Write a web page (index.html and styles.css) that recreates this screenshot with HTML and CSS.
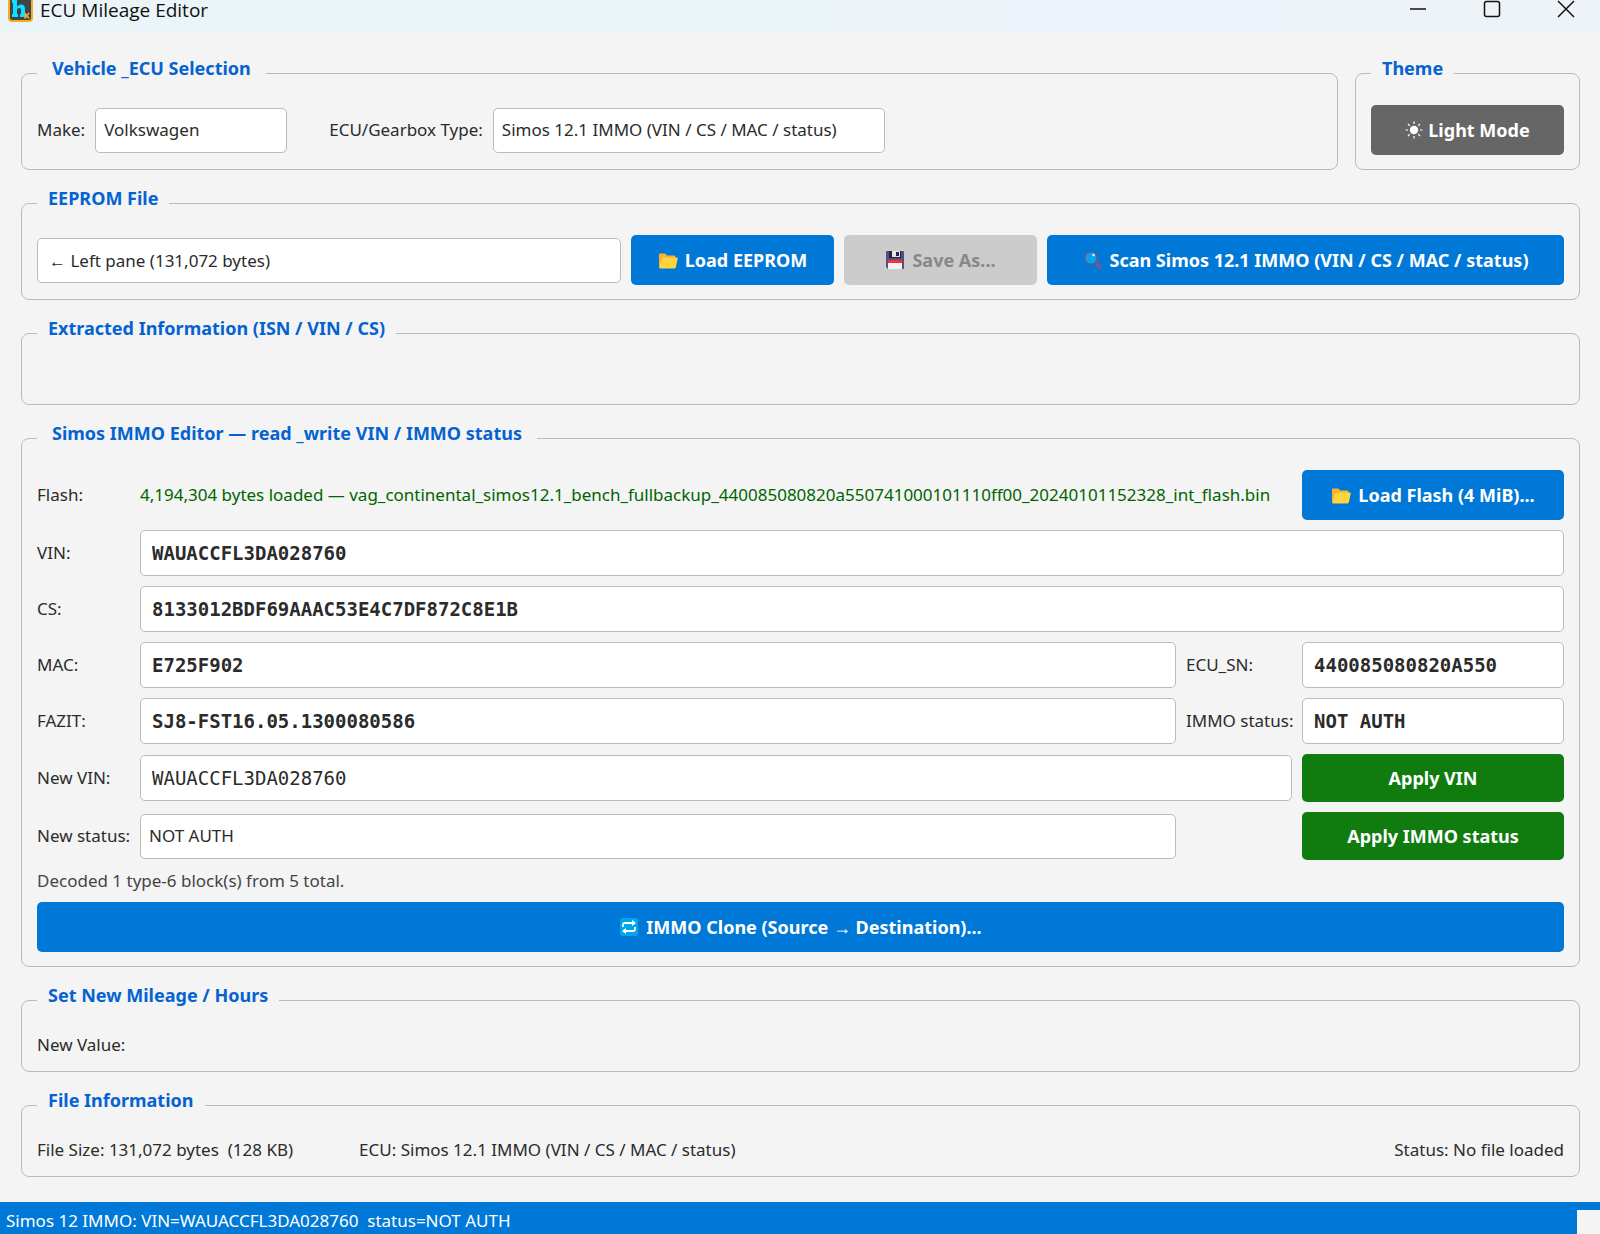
FILE: index.html
```html
<!DOCTYPE html>
<html lang="en">

<head>
    <meta charset="UTF-8">
    <meta name="viewport" content="width=device-width, initial-scale=1.0">
    <title>ECU Mileage Editor</title>
    <link rel="stylesheet" href="styles.css">
</head>

<body>
    <!-- Shared icons -->
    <svg class="sprite" aria-hidden="true">
        <symbol id="icon-folder" viewBox="0 0 20 20">
            <path d="M1 4.6Q1 3.6 2 3.6H7.2L9.2 5.6H16.4Q17.4 5.6 17.4 6.6V17H1Z" fill="#ffb02e" />
            <path d="M5.4 7.4H19Q20 7.400 19.700 8.400L17.800 17.400Q17.500 18.500 16.400 18.500H2Q1 18.500 1.300 17.400L4.300 8.200Q4.600 7.400 5.400 7.400Z" fill="#fcd53f" />
        </symbol>
    </svg>

    <header class="titlebar">
        <svg class="app-icon" viewBox="0 0 26 24" aria-hidden="true">
            <rect x="2" y="-5" width="23" height="26" rx="3" fill="#3d444c" stroke="#fbab18" stroke-width="2" />
            <path d="M5 0H10V6.500Q12 4.600 14 4.600Q18 4.600 18 9V14H19V17H13V14H14V9.500Q14 8 12.500 8Q10 8 10 10V14H11V17H5V14H6V3H5Z" fill="#0fe0ff" />
            <path d="M17.500 13L22 18.500M22 13L17.500 18.500" stroke="#fbab18" stroke-width="1.800" />
        </svg>
        <h1>ECU Mileage Editor</h1>
        <div class="window-buttons">
            <button type="button" aria-label="Minimize">
                <svg viewBox="0 0 18 18"><path d="M1 9H17" /></svg>
            </button>
            <button type="button" aria-label="Maximize">
                <svg viewBox="0 0 18 18"><rect x="1.500" y="1.500" width="15" height="15" rx="2" /></svg>
            </button>
            <button type="button" aria-label="Close">
                <svg viewBox="0 0 18 18"><path d="M1 1L17 17M17 1L1 17" /></svg>
            </button>
        </div>
    </header>

    <main>
        <div class="top-row">
            <!-- Vehicle selection -->
            <fieldset class="vehicle">
                <legend class="wide">Vehicle _ECU Selection</legend>
                <div class="row">
                    <label for="make">Make:</label>
                    <select id="make" class="make">
                        <option>Volkswagen</option>
                    </select>
                    <label for="ecuType" class="ecu-label">ECU/Gearbox Type:</label>
                    <select id="ecuType" class="ecu-type">
                        <option>Simos 12.1 IMMO (VIN / CS / MAC / status)</option>
                    </select>
                </div>
            </fieldset>

            <fieldset class="theme">
                <legend>Theme</legend>
                <div class="row">
                    <button type="button" class="btn btn-dark">
                        <svg class="sun" viewBox="0 0 18 18" aria-hidden="true">
                            <circle cx="9" cy="9" r="4.200" fill="#fff" />
                            <path d="M9 .5V3M9 15V17.500M.5 9H3M15 9H17.500M3 3L4.800 4.800M13.200 13.200L15 15M3 15L4.800 13.200M13.200 4.800L15 3" stroke="#fff" stroke-width="1.200" />
                        </svg>
                        Light Mode
                    </button>
                </div>
            </fieldset>
        </div>

        <!-- EEPROM file -->
        <fieldset>
            <legend>EEPROM File</legend>
            <div class="row">
                <input type="text" class="file-path" aria-label="EEPROM file" value="← Left pane (131,072 bytes)" readonly>
                <button type="button" class="btn load">
                    <svg class="icon" aria-hidden="true"><use href="#icon-folder" /></svg>
                    Load EEPROM
                </button>
                <button type="button" class="btn save" disabled>
                    <svg class="icon" viewBox="0 0 20 20" aria-hidden="true">
                        <path d="M1 2Q1 1 2 1H18Q19 1 19 2V18Q19 19 18 19H3L1 17Z" fill="#5a4a86" />
                        <rect x="4" y="1" width="12" height="7" fill="#321b41" />
                        <rect x="7" y="1" width="8" height="6" fill="#e6e6e6" />
                        <rect x="11" y="2" width="3" height="4" fill="#321b41" />
                        <rect x="3" y="10" width="14" height="9" fill="#f2f2f2" />
                        <rect x="3" y="10" width="14" height="3" fill="#f8312f" />
                    </svg>
                    Save As...
                </button>
                <button type="button" class="btn scan">
                    <svg class="icon" viewBox="0 0 20 20" aria-hidden="true">
                        <path d="M12 12L17 17" stroke="#6d5b95" stroke-width="4" stroke-linecap="round" />
                        <circle cx="8" cy="8" r="6.300" fill="#00a6ed" stroke="#6a5490" stroke-width="1.500" />
                        <circle cx="10.500" cy="5" r="1.300" fill="#d3f2ff" />
                    </svg>
                    Scan Simos 12.1 IMMO (VIN / CS / MAC / status)
                </button>
            </div>
        </fieldset>

        <fieldset>
            <legend>Extracted Information (ISN / VIN / CS)</legend>
            <div class="info"></div>
        </fieldset>

        <!-- IMMO editor -->
        <fieldset>
            <legend class="wide">Simos IMMO Editor — read _write VIN / IMMO status</legend>
            <div class="immo-grid">
                <span>Flash:</span>
                <output class="span-2 flash-name">4,194,304 bytes loaded — vag_continental_simos12.1_bench_fullbackup_440085080820a550741000101110ff00_20240101152328_int_flash.bin</output>
                <button type="button" class="btn">
                    <svg class="icon" aria-hidden="true"><use href="#icon-folder" /></svg>
                    Load Flash (4 MiB)...
                </button>

                <label for="vin">VIN:</label>
                <input type="text" id="vin" class="mono span-3" value="WAUACCFL3DA028760" readonly>

                <label for="cs">CS:</label>
                <input type="text" id="cs" class="mono span-3" value="8133012BDF69AAAC53E4C7DF872C8E1B" readonly>

                <label for="mac">MAC:</label>
                <input type="text" id="mac" class="mono" value="E725F902" readonly>
                <label for="ecuSn">ECU_SN:</label>
                <input type="text" id="ecuSn" class="mono" value="440085080820A550" readonly>

                <label for="fazit">FAZIT:</label>
                <input type="text" id="fazit" class="mono" value="SJ8-FST16.05.1300080586" readonly>
                <label for="immoStatus">IMMO status:</label>
                <input type="text" id="immoStatus" class="mono" value="NOT AUTH" readonly>

                <label for="newVin">New VIN:</label>
                <input type="text" id="newVin" class="mono editable span-2" value="WAUACCFL3DA028760">
                <button type="button" class="btn btn-green">Apply VIN</button>

                <label for="newStatus">New status:</label>
                <select id="newStatus">
                    <option>NOT AUTH</option>
                </select>
                <button type="button" class="btn btn-green last-col">Apply IMMO status</button>

                <p class="decoded">Decoded 1 type-6 block(s) from 5 total.</p>

                <button type="button" class="btn clone">
                    <svg class="icon" viewBox="0 0 20 20" aria-hidden="true">
                        <rect x="1" y="1" width="18" height="18" rx="2.500" fill="#00a6ed" />
                        <path d="M4 10V8Q4 6 6 6H14M16 10V12Q16 14 14 14H6" fill="none" stroke="#fff" stroke-width="1.800" />
                        <path d="M13 3L17 6L13 9ZM7 11L3 14L7 17Z" fill="#fff" />
                    </svg>
                    <span>IMMO Clone (Source <span class="arrow">→</span> Destination)...</span>
                </button>
            </div>
        </fieldset>

        <fieldset>
            <legend>Set New Mileage / Hours</legend>
            <div class="info">New Value:</div>
        </fieldset>

        <!-- File information -->
        <fieldset>
            <legend>File Information</legend>
            <div class="info">
                <span>File Size: 131,072 bytes&nbsp; (128 KB)</span>
                <span>ECU: Simos 12.1 IMMO (VIN / CS / MAC / status)</span>
                <span class="file-status">Status: No file loaded</span>
            </div>
        </fieldset>
    </main>

    <footer class="statusbar">
        <span>Simos 12 IMMO: VIN=WAUACCFL3DA028760&nbsp; status=NOT AUTH</span>
        <div class="grip"></div>
    </footer>
</body>

</html>
```
FILE: styles.css
```css
* {
    box-sizing: border-box;
}

body {
    margin: 0;
    min-height: 100vh;
    display: flex;
    flex-direction: column;
    background-color: #f4f4f4;
    color: #2b2b2b;
    font-family: "Noto Sans", sans-serif;
    font-size: 17px;
    line-height: 22px;
}

.sprite {
    display: none;
}

.titlebar {
    height: 32px;
    display: flex;
    align-items: flex-start;
    padding-left: 7px;
    background: linear-gradient(to right, #ebf4f8 50%, #edf2fb 75%, #eef3f8 90%);
}

.app-icon {
    width: 26px;
    height: 24px;
    margin-right: 7px;
}

h1 {
    margin: 0;
    color: #111;
    font-family: "Open Sans", "Noto Sans", sans-serif;
    font-size: 19px;
    font-weight: normal;
    line-height: 20px;
}

.window-buttons {
    margin-left: auto;
    display: flex;
    padding-right: 10px;
}

.window-buttons button {
    width: 48px;
    height: 18px;
    margin-left: 26px;
    padding: 0;
    border: none;
    background: none;
}

.window-buttons svg {
    width: 18px;
    height: 18px;
    fill: none;
    stroke: #111;
    stroke-width: 1.5;
}

main {
    flex: 1;
    display: flex;
    flex-direction: column;
    gap: 17px;
    padding: 25px 20px 24px 21px;
}

.top-row {
    display: flex;
    gap: 17px;
}

fieldset {
    min-width: 0;
    margin: 0;
    padding: 16px 15px 14px;
    border: 1px solid #bbb;
    border-radius: 8px;
}

/* extra bottom padding lifts the caption above the frame line */
legend {
    padding: 0 11px 10px;
    color: #0563d1;
    font-size: 18px;
    font-weight: bold;
}

legend.wide {
    padding: 0 15px 10px;
}

.vehicle {
    flex: 1;
}

.theme {
    width: 225px;
}

.theme .btn {
    flex: 1;
}

.row {
    display: flex;
    align-items: center;
    gap: 10px;
    min-height: 50px;
}

input,
select {
    width: 100%;
    min-width: 0;
    height: 45px;
    padding: 0 11px;
    border: 1px solid #bbb;
    border-radius: 5px;
    background-color: white;
    color: #2b2b2b;
    font: inherit;
}

select {
    appearance: none;
    padding: 0 8px;
}

.make {
    width: 192px;
}

.ecu-label {
    margin-left: 32px;
}

.ecu-type {
    width: 392px;
}

.file-path {
    flex: 1;
}

.mono {
    height: 46px;
    font-family: "DejaVu Sans Mono", monospace;
    font-size: 19px;
    font-weight: bold;
}

.mono.editable {
    font-weight: normal;
}

.btn {
    height: 50px;
    display: flex;
    align-items: center;
    justify-content: center;
    gap: 7px;
    padding: 0;
    border: none;
    border-radius: 5px;
    background-color: #0078d7;
    color: white;
    font: inherit;
    font-size: 18px;
    font-weight: bold;
    white-space: nowrap;
}

.btn-dark {
    background-color: #666;
    gap: 5px;
}

.btn-green {
    height: 48px;
    background-color: #107c10;
}

.btn:disabled {
    background-color: #ccc;
    color: #888;
}

.icon {
    width: 20px;
    height: 20px;
}

.sun {
    width: 18px;
    height: 18px;
}

.load {
    width: 203px;
}

.save {
    width: 193px;
}

.scan {
    width: 517px;
}

.info {
    display: flex;
    min-height: 25px;
    gap: 66px;
    align-items: center;
}

.file-status {
    margin-left: auto;
}

.immo-grid {
    display: grid;
    grid-template-columns: 93px 1fr 106px 262px;
    gap: 10px;
    align-items: center;
    white-space: nowrap;
}

.span-2 {
    grid-column: span 2;
}

.span-3 {
    grid-column: span 3;
}

.last-col {
    grid-column: 4;
}

.flash-name {
    color: #006400;
    overflow: hidden;
}

.decoded {
    grid-column: 1 / -1;
    margin: 0;
    color: #444;
}

.clone {
    grid-column: 1 / -1;
}

.arrow {
    font-weight: normal;
}

.statusbar {
    display: flex;
    justify-content: space-between;
    border-top: 8px solid #0078d7;
    background-color: #0078d7;
    color: white;
    height: 32px;
    padding-left: 6px;
}

.grip {
    width: 23px;
    background-color: #f4f4f4;
}
```
